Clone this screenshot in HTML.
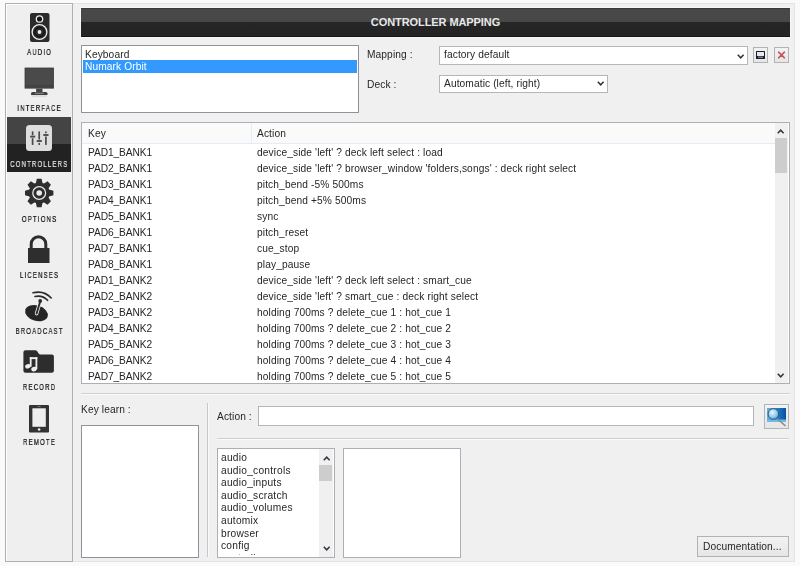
<!DOCTYPE html>
<html><head><meta charset="utf-8">
<style>
*{margin:0;padding:0;box-sizing:border-box}
html,body{width:800px;height:566px;overflow:hidden;background:#fafafa;font-family:"Liberation Sans",sans-serif;color:#000}
body{position:relative}
.a{position:absolute}
.t{font-size:10.2px;letter-spacing:0.1px;white-space:nowrap;line-height:normal;color:#262626;will-change:transform}
.sl{font-size:8.6px;letter-spacing:1.7px;padding-left:1.7px;white-space:nowrap;line-height:normal;color:#111;width:80px;left:-1.3px;text-align:center;transform:scaleX(0.7);will-change:transform;-webkit-text-stroke-width:0.22px}
.box{background:#fff;border:1px solid #8e929a}
.lbox{background:#fff;border:1px solid #acafb5}
.dd{background:#fff;border:1px solid #b4b6ba}
.btn{background:linear-gradient(#f2f2f2,#e6e6e6);border:1px solid #b3b3b3}
svg{position:absolute;overflow:visible}
</style></head><body>
<div class="a" style="left:5px;top:3px;width:68px;height:559px;border:1px solid #adb0b8;background:#efefef;box-shadow:inset 1px 1px 0 #fff"></div>
<div class="a" style="left:73px;top:3px;width:722px;height:559px;border:1px solid #e3e3e3;border-left:0;background:#f0f0f0"></div>
<div class="a" style="left:7px;top:117px;width:64px;height:55px;background:linear-gradient(#444 0,#444 27px,#222 27px,#222 55px)"></div>
<div class="a sl" style="top:47px;">AUDIO</div>
<div class="a sl" style="top:103px;">INTERFACE</div>
<div class="a sl" style="top:159px;color:#e6e6e6;left:-3.3px;-webkit-text-stroke-width:0.2px;">CONTROLLERS</div>
<div class="a sl" style="top:214px;">OPTIONS</div>
<div class="a sl" style="top:270px;">LICENSES</div>
<div class="a sl" style="top:326px;">BROADCAST</div>
<div class="a sl" style="top:382px;">RECORD</div>
<div class="a sl" style="top:437px;">REMOTE</div>
<svg style="left:0;top:0" width="80" height="460">
<rect x="30" y="13" width="19.5" height="29" rx="2" fill="#2b2b2b"/>
<circle cx="39.5" cy="19" r="3.2" fill="#151515" stroke="#eee" stroke-width="1.3"/>
<circle cx="39.5" cy="32" r="7.4" fill="none" stroke="#eee" stroke-width="1.3"/>
<circle cx="39.5" cy="32" r="4.6" fill="none" stroke="#161616" stroke-width="1.6"/>
<circle cx="39.5" cy="32" r="1.9" fill="#eee"/>
<rect x="24.6" y="67.6" width="29.3" height="21" fill="#3c3c3c"/>
<rect x="25.4" y="68.4" width="27.7" height="16.6" fill="#4a4a4a"/>
<rect x="25.4" y="85.6" width="27.7" height="2.3" fill="#444"/>
<rect x="36.1" y="88.6" width="6.4" height="4.2" fill="#444"/>
<path d="M31 95 L31 93.5 Q31 92 32.5 92 L46 92 Q47.5 92 47.5 93.5 L47.5 95 Z" fill="#404040"/>
<rect x="35" y="92.8" width="8.8" height="0.9" fill="#9a9a9a"/>
<rect x="31.5" y="95.2" width="15.5" height="2" fill="#dcdcdc"/>
<rect x="26" y="125" width="26" height="26" rx="3.5" fill="#dedede"/>
<g stroke="#4a4a4a" stroke-width="1.7" stroke-linecap="round">
<line x1="32.6" y1="132" x2="32.6" y2="134.4"/>
<line x1="32.6" y1="138.8" x2="32.6" y2="144.2"/>
<line x1="39.2" y1="132" x2="39.2" y2="138.8"/>
<line x1="39.2" y1="143.6" x2="39.2" y2="144.2"/>
<line x1="45.9" y1="132" x2="45.9" y2="132.4"/>
<line x1="45.9" y1="137.2" x2="45.9" y2="144.2"/>
</g>
<g stroke="#4a4a4a" stroke-width="1.9">
<line x1="30.1" y1="136.6" x2="35.2" y2="136.6"/>
<line x1="36.7" y1="141" x2="41.8" y2="141"/>
<line x1="43.3" y1="135" x2="48.5" y2="135"/>
</g>
</svg>
<svg style="left:0;top:0" width="80" height="460">
<path d="M35.80 183.38 L36.83 178.80 L41.57 178.80 L42.60 183.38 L43.59 183.80 L47.57 181.28 L50.92 184.63 L48.40 188.61 L48.82 189.60 L53.40 190.63 L53.40 195.37 L48.82 196.40 L48.40 197.39 L50.92 201.37 L47.57 204.72 L43.59 202.20 L42.60 202.62 L41.57 207.20 L36.83 207.20 L35.80 202.62 L34.81 202.20 L30.83 204.72 L27.48 201.37 L30.00 197.39 L29.58 196.40 L25.00 195.37 L25.00 190.63 L29.58 189.60 L30.00 188.61 L27.48 184.63 L30.83 181.28 L34.81 183.80 Z" fill="#2e2e2e"/>
<circle cx="39.2" cy="193.0" r="10.4" fill="#2e2e2e"/>
<circle cx="39.2" cy="193.0" r="6.4" fill="none" stroke="#e8e8e8" stroke-width="1.3"/>
<circle cx="39.2" cy="193.0" r="2.8" fill="#eee"/>
<rect x="28" y="248" width="21.5" height="15" fill="#2e2e2e"/>
<path d="M31.2 248.5 L31.2 244 A7.3 7.3 0 0 1 45.8 244 L45.8 248.5" fill="none" stroke="#2e2e2e" stroke-width="3"/>
<ellipse cx="36.5" cy="313.2" rx="11.7" ry="7.7" transform="rotate(17 36.5 313.2)" fill="#252525"/>
<line x1="36.6" y1="313.6" x2="40.2" y2="301.5" stroke="#eee" stroke-width="3.6" stroke-linecap="round"/>
<line x1="36.6" y1="313.6" x2="40.2" y2="301.5" stroke="#2a2a2a" stroke-width="1.9" stroke-linecap="round"/>
<circle cx="40.2" cy="300.9" r="1.9" fill="#2a2a2a"/>
<path d="M33 292.8 Q44 290 51.2 298" fill="none" stroke="#2a2a2a" stroke-width="1.6" stroke-linecap="round"/>
<path d="M35 296.5 Q42.5 295 47.6 300.3" fill="none" stroke="#2a2a2a" stroke-width="1.6" stroke-linecap="round"/>
<path d="M23.4 352.3 Q23.4 350.2 25.5 350.2 L35 350.2 Q36.4 350.2 37.4 351.6 L38.3 353 Q39.2 354.5 40.6 354.5 L51.8 354.5 Q53.9 354.5 53.9 356.6 L53.9 370.7 Q53.9 372.8 51.8 372.8 L25.5 372.8 Q23.4 372.8 23.4 370.7 Z" fill="#2d2d2d"/>
<g fill="#eee">
<rect x="29.8" y="357.2" width="1.8" height="9.5"/>
<rect x="35.5" y="357.2" width="1.8" height="12"/>
<rect x="29.8" y="357.2" width="7.5" height="1.9"/>
<ellipse cx="27.9" cy="366.3" rx="2.8" ry="2.2" transform="rotate(-20 27.9 366.3)"/>
<ellipse cx="34" cy="369.1" rx="2.8" ry="2.2" transform="rotate(-20 34 369.1)"/>
</g>
<rect x="29" y="405" width="20" height="27.5" rx="1" fill="#333"/>
<rect x="32.4" y="408.3" width="13.4" height="18.5" fill="#eee"/>
<circle cx="39.1" cy="429.5" r="1.3" fill="#eee"/>
<rect x="37.5" y="406" width="3.2" height="0.8" fill="#888"/>
</svg>
<div class="a" style="left:80px;top:7px;width:711px;height:31px;background:#f7f7f7"></div>
<div class="a" style="left:81px;top:8px;width:709px;height:29px;background:linear-gradient(#3a3a3a 0,#3a3a3a 1px,#484848 1px,#484848 14px,#262626 14px,#242424 28px,#141414 28px)"></div>
<div class="a" style="left:81px;top:16px;width:709px;text-align:center;font-size:11px;font-weight:bold;color:#e8e8e8;line-height:normal;letter-spacing:-0.08px">CONTROLLER MAPPING</div>
<div class="a box" style="left:81px;top:45px;width:278px;height:68px"></div>
<div class="a" style="left:83px;top:60px;width:274px;height:13px;background:#3399ff"></div>
<div class="a t" style="left:85px;top:49px;">Keyboard</div>
<div class="a t" style="left:85px;top:61px;color:#fff">Numark Orbit</div>
<div class="a t" style="left:367px;top:49px;">Mapping :</div>
<div class="a t" style="left:367px;top:79px;">Deck :</div>
<div class="a dd" style="left:439px;top:46px;width:309px;height:19px"></div>
<div class="a t" style="left:444px;top:49px;">factory default</div>
<div class="a dd" style="left:439px;top:75px;width:169px;height:18px"></div>
<div class="a t" style="left:444px;top:78px;">Automatic (left, right)</div>
<svg style="left:737px;top:54px" width="8" height="6"><path d="M0.8 0.8 L3.7 3.8 L6.6 0.8" fill="none" stroke="#333" stroke-width="1.5"/></svg>
<svg style="left:597px;top:81px" width="8" height="6"><path d="M0.8 0.8 L3.7 3.8 L6.6 0.8" fill="none" stroke="#333" stroke-width="1.5"/></svg>
<div class="a btn" style="left:753px;top:47px;width:15px;height:16px"></div>
<svg style="left:756px;top:51px" width="9" height="8">
<rect x="0" y="0" width="9" height="8" rx="0.5" fill="#1a1d28"/>
<rect x="1" y="1" width="7" height="4" fill="#e2e8f0"/>
<rect x="2" y="5.6" width="5" height="1.3" fill="#8a8a8a"/>
</svg>
<div class="a btn" style="left:774px;top:47px;width:15px;height:16px"></div>
<svg style="left:777px;top:51px" width="9" height="9">
<path d="M1.6 1.2 L7.4 6.8 M7.4 1.2 L1.6 6.8" stroke="#c25858" stroke-width="1.6" stroke-linecap="round"/>
</svg>
<div class="a lbox" style="left:81px;top:122px;width:709px;height:262px"></div>
<div class="a" style="left:82px;top:123px;width:693px;height:20px;background:#fafafa"></div>
<div class="a" style="left:82px;top:143px;width:693px;height:1px;background:#e4ecf6"></div>
<div class="a" style="left:251px;top:123px;width:1px;height:20px;background:#e4ecf6"></div>
<div class="a t" style="left:88px;top:128px;">Key</div>
<div class="a t" style="left:257px;top:128px;">Action</div>
<div class="a t" style="left:87.6px;top:147px;letter-spacing:-0.08px">PAD1_BANK1</div>
<div class="a t" style="left:257px;top:147px;letter-spacing:0.12px">device_side &#39;left&#39; ? deck left select : load</div>
<div class="a t" style="left:87.6px;top:163px;letter-spacing:-0.08px">PAD2_BANK1</div>
<div class="a t" style="left:257px;top:163px;letter-spacing:0.12px">device_side &#39;left&#39; ? browser_window &#39;folders,songs&#39; : deck right select</div>
<div class="a t" style="left:87.6px;top:179px;letter-spacing:-0.08px">PAD3_BANK1</div>
<div class="a t" style="left:257px;top:179px;letter-spacing:0.12px">pitch_bend -5% 500ms</div>
<div class="a t" style="left:87.6px;top:195px;letter-spacing:-0.08px">PAD4_BANK1</div>
<div class="a t" style="left:257px;top:195px;letter-spacing:0.12px">pitch_bend +5% 500ms</div>
<div class="a t" style="left:87.6px;top:211px;letter-spacing:-0.08px">PAD5_BANK1</div>
<div class="a t" style="left:257px;top:211px;letter-spacing:0.12px">sync</div>
<div class="a t" style="left:87.6px;top:227px;letter-spacing:-0.08px">PAD6_BANK1</div>
<div class="a t" style="left:257px;top:227px;letter-spacing:0.12px">pitch_reset</div>
<div class="a t" style="left:87.6px;top:243px;letter-spacing:-0.08px">PAD7_BANK1</div>
<div class="a t" style="left:257px;top:243px;letter-spacing:0.12px">cue_stop</div>
<div class="a t" style="left:87.6px;top:259px;letter-spacing:-0.08px">PAD8_BANK1</div>
<div class="a t" style="left:257px;top:259px;letter-spacing:0.12px">play_pause</div>
<div class="a t" style="left:87.6px;top:275px;letter-spacing:-0.08px">PAD1_BANK2</div>
<div class="a t" style="left:257px;top:275px;letter-spacing:0.12px">device_side &#39;left&#39; ? deck left select : smart_cue</div>
<div class="a t" style="left:87.6px;top:291px;letter-spacing:-0.08px">PAD2_BANK2</div>
<div class="a t" style="left:257px;top:291px;letter-spacing:0.12px">device_side &#39;left&#39; ? smart_cue : deck right select</div>
<div class="a t" style="left:87.6px;top:307px;letter-spacing:-0.08px">PAD3_BANK2</div>
<div class="a t" style="left:257px;top:307px;letter-spacing:0.12px">holding 700ms ? delete_cue 1 : hot_cue 1</div>
<div class="a t" style="left:87.6px;top:323px;letter-spacing:-0.08px">PAD4_BANK2</div>
<div class="a t" style="left:257px;top:323px;letter-spacing:0.12px">holding 700ms ? delete_cue 2 : hot_cue 2</div>
<div class="a t" style="left:87.6px;top:339px;letter-spacing:-0.08px">PAD5_BANK2</div>
<div class="a t" style="left:257px;top:339px;letter-spacing:0.12px">holding 700ms ? delete_cue 3 : hot_cue 3</div>
<div class="a t" style="left:87.6px;top:355px;letter-spacing:-0.08px">PAD6_BANK2</div>
<div class="a t" style="left:257px;top:355px;letter-spacing:0.12px">holding 700ms ? delete_cue 4 : hot_cue 4</div>
<div class="a t" style="left:87.6px;top:371px;letter-spacing:-0.08px">PAD7_BANK2</div>
<div class="a t" style="left:257px;top:371px;letter-spacing:0.12px">holding 700ms ? delete_cue 5 : hot_cue 5</div>
<div class="a" style="left:775px;top:123px;width:13px;height:260px;background:#f0f0f0"></div>
<div class="a" style="left:775px;top:138px;width:12px;height:35px;background:#cdcdcd"></div>
<svg style="left:777px;top:129px" width="8" height="6"><path d="M0.8 4.2 L3.7 1.2 L6.6 4.2" fill="none" stroke="#333" stroke-width="1.5"/></svg>
<svg style="left:777px;top:373px" width="8" height="6"><path d="M0.8 0.8 L3.7 3.8 L6.6 0.8" fill="none" stroke="#333" stroke-width="1.5"/></svg>
<div class="a" style="left:81px;top:393px;width:709px;height:1px;background:#cfcfcf"></div>
<div class="a" style="left:81px;top:394px;width:709px;height:1px;background:#fbfbfb"></div>
<div class="a t" style="left:81px;top:404px;">Key learn :</div>
<div class="a box" style="left:81px;top:425px;width:118px;height:133px"></div>
<div class="a" style="left:207px;top:403px;width:1px;height:154px;background:#c8c8c8"></div>
<div class="a" style="left:208px;top:403px;width:1px;height:154px;background:#fafafa"></div>
<div class="a t" style="left:217px;top:411px;">Action :</div>
<div class="a dd" style="left:258px;top:406px;width:496px;height:20px"></div>
<div class="a btn" style="left:764px;top:404px;width:25px;height:25px"></div>
<svg style="left:767px;top:408px" width="20" height="20">
<defs><linearGradient id="bg1" x1="0" x2="1" y1="0" y2="0"><stop offset="0" stop-color="#5fb4e8"/><stop offset="0.6" stop-color="#1a78c8"/><stop offset="1" stop-color="#0a4f9e"/></linearGradient>
<radialGradient id="lg" cx="0.4" cy="0.35" r="0.7"><stop offset="0" stop-color="#e8f6ff"/><stop offset="0.6" stop-color="#8fd0f2"/><stop offset="1" stop-color="#3f9fd8"/></radialGradient></defs>
<rect x="0" y="0" width="19" height="14" fill="url(#bg1)"/>
<rect x="0" y="11.5" width="19" height="2.5" fill="#6fb8ea"/>
<line x1="10" y1="10.5" x2="18" y2="17.5" stroke="#888" stroke-width="1.6" stroke-linecap="round"/>
<circle cx="6.4" cy="6" r="5.3" fill="url(#lg)" stroke="#4a5560" stroke-width="1"/>
</svg>
<div class="a" style="left:217px;top:438px;width:572px;height:1px;background:#cfcfcf"></div>
<div class="a" style="left:217px;top:439px;width:572px;height:1px;background:#fbfbfb"></div>
<div class="a lbox" style="left:217px;top:448px;width:118px;height:110px;overflow:hidden"></div>
<div class="a t" style="left:221px;top:452px;letter-spacing:0.25px;clip-path:inset(0 0 0px 0)">audio</div>
<div class="a t" style="left:221px;top:465px;letter-spacing:0.25px;clip-path:inset(0 0 0px 0)">audio_controls</div>
<div class="a t" style="left:221px;top:477px;letter-spacing:0.25px;clip-path:inset(0 0 0px 0)">audio_inputs</div>
<div class="a t" style="left:221px;top:490px;letter-spacing:0.25px;clip-path:inset(0 0 0px 0)">audio_scratch</div>
<div class="a t" style="left:221px;top:502px;letter-spacing:0.25px;clip-path:inset(0 0 0px 0)">audio_volumes</div>
<div class="a t" style="left:221px;top:515px;letter-spacing:0.25px;clip-path:inset(0 0 0px 0)">automix</div>
<div class="a t" style="left:221px;top:528px;letter-spacing:0.25px;clip-path:inset(0 0 0px 0)">browser</div>
<div class="a t" style="left:221px;top:540px;letter-spacing:0.25px;clip-path:inset(0 0 0px 0)">config</div>
<div class="a t" style="left:221px;top:553px;letter-spacing:0.25px;clip-path:inset(0 0 9px 0)">controllers</div>
<div class="a" style="left:319px;top:449px;width:14px;height:108px;background:#f0f0f0"></div>
<div class="a" style="left:319px;top:465px;width:13px;height:16px;background:#cdcdcd"></div>
<svg style="left:322.5px;top:455.5px" width="8" height="6"><path d="M0.8 4.2 L3.7 1.2 L6.6 4.2" fill="none" stroke="#333" stroke-width="1.5"/></svg>
<svg style="left:322.5px;top:546px" width="8" height="6"><path d="M0.8 0.8 L3.7 3.8 L6.6 0.8" fill="none" stroke="#333" stroke-width="1.5"/></svg>
<div class="a lbox" style="left:343px;top:448px;width:118px;height:110px"></div>
<div class="a btn" style="left:697px;top:536px;width:92px;height:21px"></div>
<div class="a t" style="left:703px;top:541px;">Documentation...</div>
</body></html>
